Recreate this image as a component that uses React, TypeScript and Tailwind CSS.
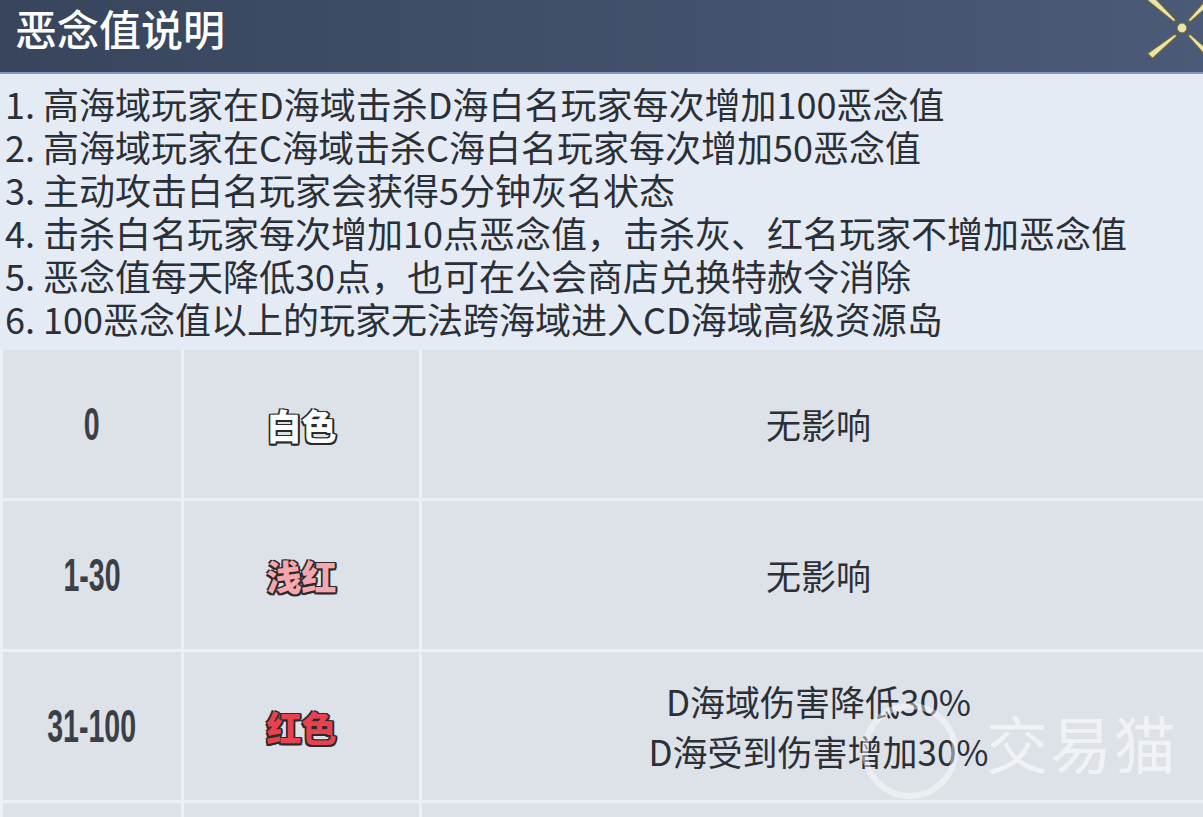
const cjk = 'font-["Noto_Sans_CJK_SC","Noto_Sans",sans-serif]';

const rules = [
  '1. 高海域玩家在D海域击杀D海白名玩家每次增加100恶念值',
  '2. 高海域玩家在C海域击杀C海白名玩家每次增加50恶念值',
  '3. 主动攻击白名玩家会获得5分钟灰名状态',
  '4. 击杀白名玩家每次增加10点恶念值，击杀灰、红名玩家不增加恶念值',
  '5. 恶念值每天降低30点，也可在公会商店兑换特赦令消除',
  '6. 100恶念值以上的玩家无法跨海域进入CD海域高级资源岛',
];

const levels = [
  { range: '0', name: '白色', color: 'text-white', effect: ['无影响'] },
  { range: '1-30', name: '浅红', color: 'text-[#f4a7ae]', effect: ['无影响'] },
  { range: '31-100', name: '红色', color: 'text-[#e8414f]', effect: ['D海域伤害降低30%', 'D海受到伤害增加30%'] },
  { range: '', name: '', color: '', effect: [] },
];

// gold cross in the corner, the right arms run off the edge
function CloseIcon() {
  return (
    <svg width="66" height="60" viewBox="0 0 66 60" className="absolute top-0 right-0">
      <g stroke="#6b6640" strokeWidth="1.2" strokeLinejoin="round" fill="#ece6a6">
        <polygon points="39,20 37,22 10.5,0.5 15.5,-4.5" />
        <polygon points="40,36 38,34 10.5,53.5 15.5,58.5" />
        <polygon points="53,22 51,20 74.5,-6.5 79.5,-1.5" />
        <polygon points="51,36 53,34 79.5,57.5 74.5,62.5" />
      </g>
      <circle cx="45" cy="28" r="5" fill="#ece6a6" stroke="#6b6640" strokeWidth="1.2" />
    </svg>
  );
}

function Watermark() {
  return (
    <div className="absolute left-[862px] top-[703px] pointer-events-none">
      <div className="w-[96px] h-[96px] rounded-full border-[6px] border-white/45" />
      <span className={`absolute left-[124px] top-[8px] text-[62px] leading-none text-white/55 tracking-[2px] whitespace-nowrap ${cjk}`}>
        交易猫
      </span>
    </div>
  );
}

export default function App() {
  return (
    <div className={`relative w-[1203px] h-[817px] overflow-hidden bg-[#e4ebf5] ${cjk}`}>
      <header className="relative h-[74px] bg-gradient-to-r from-[#38455d] to-[#4b5a77] border-b-2 border-[#8595c0] pl-[15px] pt-[4px]">
        <h1 className="text-[42px] leading-[48px] text-white font-medium">恶念值说明</h1>
        <CloseIcon />
      </header>

      <ol className="pt-[8px] pl-[5px] text-[36px] leading-[43px] text-[#2b2f36] whitespace-nowrap">
        {rules.map((r) => (
          <li key={r}>{r}</li>
        ))}
      </ol>

      <div className="mt-[10px] pl-[3px] grid grid-cols-[178px_235px_1fr] gap-[3px] bg-[#edf0f5]">
        {levels.map((lv, i) => (
          <div key={i} className="contents">
            <div className="h-[148px] bg-[#dde1e8] flex items-center justify-center">
              <span className="inline-block text-[46px] leading-none font-bold text-[#3b3f46] scale-x-[0.62] font-['Liberation_Sans',sans-serif]">
                {lv.range}
              </span>
            </div>
            <div className="h-[148px] bg-[#dde1e8] flex items-center justify-center">
              <span
                className={`text-[35px] leading-none font-black ${lv.color} [text-shadow:-1.5px_-1.5px_0_#2a2a2a,1.5px_-1.5px_0_#2a2a2a,-1.5px_1.5px_0_#2a2a2a,1.5px_1.5px_0_#2a2a2a,0_2px_0_#2a2a2a,2px_0_0_#2a2a2a]`}
              >
                {lv.name}
              </span>
            </div>
            <div className="h-[148px] bg-[#dde1e8] flex flex-col items-center justify-center pl-[12px] text-[35px] leading-[50px] text-[#2b2f36]">
              {lv.effect.map((e) => (
                <div key={e}>{e}</div>
              ))}
            </div>
          </div>
        ))}
      </div>

      <Watermark />
    </div>
  );
}
